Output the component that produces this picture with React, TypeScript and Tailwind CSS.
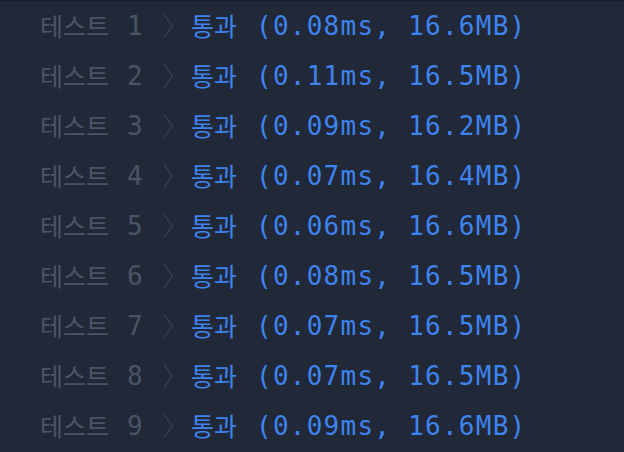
const rows = [
  ["1", "0.08", "16.6"],
  ["2", "0.11", "16.5"],
  ["3", "0.09", "16.2"],
  ["4", "0.07", "16.4"],
  ["5", "0.06", "16.6"],
  ["6", "0.08", "16.5"],
  ["7", "0.07", "16.5"],
  ["8", "0.07", "16.5"],
  ["9", "0.09", "16.6"],
];

const mono = { fontFamily: '"DejaVu Sans Mono", "Noto Sans CJK KR", monospace' };

const Chevron = () => (
  <svg width="12" height="26" viewBox="0 0 12 26" className="shrink-0">
    <path d="M1.5 1 L10.5 13 L1.5 25" fill="none" stroke="#363f4f" strokeWidth="1.3" />
  </svg>
);

export default function App() {
  return (
    <div className="w-[624px] h-[452px] bg-[#212837] border-t border-[#1b202c] overflow-hidden" style={mono}>
      {rows.map(([n, ms, mb]) => (
        <div key={n} className="flex items-center h-[50px] pl-[40px]">
          <span className="w-[75px] text-[25px] text-[#4b5465] font-['Noto_Sans_CJK_KR',sans-serif]">테스트</span>
          <span className="ml-[12px] w-[16px] text-[26px] text-[#4b5465]">{n}</span>
          <span className="ml-[19px]"><Chevron /></span>
          <span className="ml-[17px] w-[50px] text-[25px] text-[#3e83ee] font-['Noto_Sans_CJK_KR',sans-serif]">통과</span>
          <span className="ml-[15px] text-[26px] text-[#3e83ee] tracking-[1.25px]">({ms}ms, {mb}MB)</span>
        </div>
      ))}
    </div>
  );
}
